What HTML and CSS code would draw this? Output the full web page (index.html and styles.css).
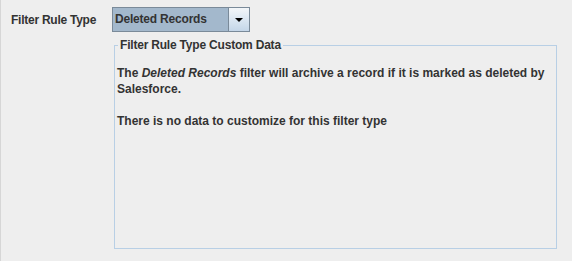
FILE: index.html
```html
<!DOCTYPE html>
<html>
<head>
<meta charset="utf-8">
<link rel="stylesheet" href="styles.css">
</head>
<body>
<div class="page">
  <div class="row">
    <span class="label">Filter Rule Type</span>
    <div class="combo">
      <span class="combo-value">Deleted Records</span>
      <span class="combo-button">
        <svg width="8" height="4" viewBox="0 0 8 4"><polygon points="0,0 8,0 4,4" fill="#000"/></svg>
      </span>
    </div>
  </div>
  <fieldset class="group">
    <legend class="group-title">Filter Rule Type Custom Data</legend>
    <p class="desc">The <i>Deleted Records</i> filter will archive a record if it is marked as deleted by Salesforce.</p>
    <p class="desc">There is no data to customize for this filter type</p>
  </fieldset>
</div>
</body>
</html>
```
FILE: styles.css
```css
html, body {
  margin: 0;
  padding: 0;
  background: #eeeeee;
}
body {
  width: 572px;
  height: 261px;
  overflow: hidden;
}
.page {
  box-sizing: border-box;
  height: 261px;
  border-left: 1px solid #d6d6d6;
  font-family: "Liberation Sans", Arial, sans-serif;
  font-size: 12px;
  font-weight: bold;
  color: #333333;
  display: flex;
  flex-direction: column;
}
.row {
  display: flex;
  align-items: center;
  padding: 7px 0 0 10px;
}
.label {
  width: 101px;
  line-height: 16px;
  letter-spacing: -0.25px;
}
.combo {
  box-sizing: border-box;
  width: 138px;
  height: 25px;
  border: 1px solid #7a8a99;
  display: flex;
}
.combo-value {
  flex: 1;
  background: #a3b8cc;
  padding-left: 2px;
  line-height: 23px;
  letter-spacing: -0.2px;
}
.combo-button {
  box-sizing: border-box;
  width: 21px;
  border-left: 1px solid #7a8a99;
  background: linear-gradient(#f3f6f9, #dde8f3 45%, #c4d6e8);
  display: flex;
  align-items: center;
  justify-content: center;
}
.combo-button svg {
  display: block;
  margin-top: 1px;
}
.group {
  box-sizing: border-box;
  margin: 5px 0 0 113px;
  width: 443px;
  height: 212px;
  border: 1px solid #b8cfe5;
  padding: 12px 2px 0 2px;
  min-width: 0;
}
.group-title {
  padding: 0 2px;
  margin-left: 1px;
  line-height: 16px;
  letter-spacing: -0.2px;
}
.desc {
  margin: 0 0 16px 0;
  line-height: 16px;
}
```
